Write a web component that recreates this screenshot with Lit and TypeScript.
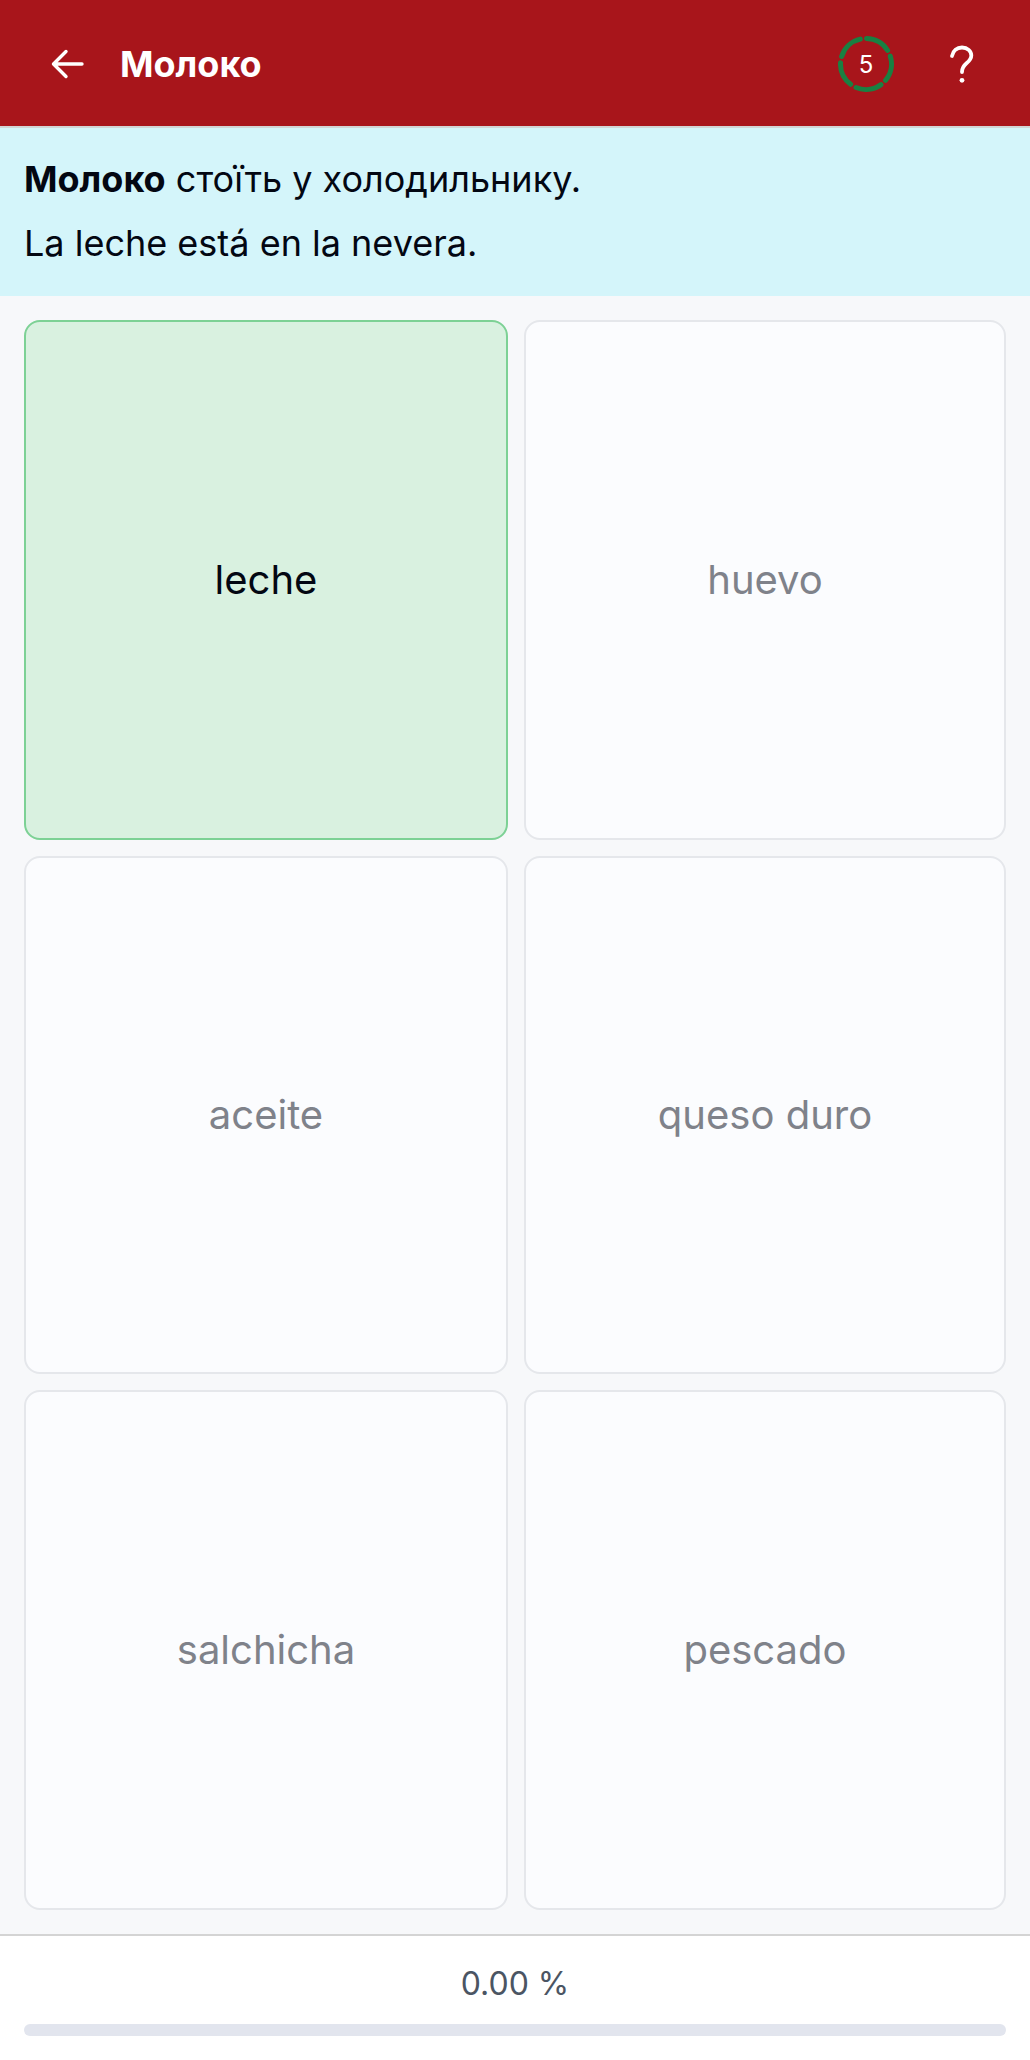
import { LitElement, html, css } from "lit";
import { customElement } from "lit/decorators.js";

const OPTIONS = [
    { label: "leche", correct: true },
    { label: "huevo", correct: false },
    { label: "aceite", correct: false },
    { label: "queso duro", correct: false },
    { label: "salchicha", correct: false },
    { label: "pescado", correct: false },
];

// where the timer ring is broken, degrees clockwise from 12 o'clock
const RING_GAPS = [-6, 65, 137, 210, 280];
const RING_R = 25.5;

function ringPath() {
    const point = (deg: number) => {
        const a = (deg * Math.PI) / 180;
        return `${(28 + RING_R * Math.sin(a)).toFixed(2)} ${(28 - RING_R * Math.cos(a)).toFixed(2)}`;
    };
    return RING_GAPS.map((gap, i) => {
        const next = RING_GAPS[(i + 1) % RING_GAPS.length] + (i === RING_GAPS.length - 1 ? 360 : 0);
        return `M${point(gap + 7)}A${RING_R} ${RING_R} 0 0 1 ${point(next - 7)}`;
    }).join("");
}

@customElement("app-root")
export class AppRoot extends LitElement {
    static styles = css`
        :host {
            display: flex;
            flex-direction: column;
            width: 1030px;
            height: 2060px;
            background: #f7f8fa;
            font-family: Inter, "Noto Sans", sans-serif;
            color: #030712;
        }
        .toolbar {
            flex: none;
            display: flex;
            align-items: center;
            box-sizing: border-box;
            height: 128px;
            padding: 2px 24px 0;
            background: #a8151b;
            color: #fff;
            border-bottom: 2px solid #d1d5d5;
        }
        .back {
            display: block;
            width: 48px;
            height: 48px;
            margin-left: 20px;
        }
        .title {
            flex: 1;
            margin-left: 28px;
            font-size: 36px;
            font-weight: 700;
        }
        .timer {
            position: relative;
            width: 56px;
            height: 56px;
            margin-right: 44px;
            display: flex;
            align-items: center;
            justify-content: center;
            font-size: 24px;
        }
        .timer svg {
            position: absolute;
            inset: 0;
        }
        .help {
            display: block;
            width: 48px;
            height: 48px;
            margin-right: 20px;
        }
        .hint {
            flex: none;
            height: 168px;
            box-sizing: border-box;
            padding: 0 24px 2px;
            display: flex;
            flex-direction: column;
            justify-content: center;
            gap: 20px;
            background: #d4f5fa;
            font-size: 36px;
            line-height: 44px;
        }
        .hint p {
            margin: 0;
        }
        .grid {
            flex: 1;
            display: grid;
            grid-template-columns: 484px 482px;
            grid-template-rows: 520px 518px 520px;
            gap: 16px;
            padding: 24px;
        }
        .card {
            display: flex;
            align-items: center;
            justify-content: center;
            padding-bottom: 2px;
            border: 2px solid #e5e7eb;
            border-radius: 16px;
            background: #fbfcfe;
            color: #7f828a;
            font-size: 40px;
        }
        .card.correct {
            border-color: #7dd195;
            background: #d9f1e0;
            color: #030712;
        }
        .footer {
            flex: none;
            height: 126px;
            box-sizing: border-box;
            padding: 29px 24px 0;
            background: #fff;
            border-top: 2px solid #d4d4d4;
            text-align: center;
            font-size: 32px;
            line-height: 38px;
            color: #4b5563;
        }
        .bar {
            height: 12px;
            margin-top: 21px;
            border-radius: 6px;
            background: #e2e5ee;
        }
    `;

    render() {
        return html`
            <div class="toolbar">
                <svg class="back" viewBox="0 0 48 48" fill="none" stroke="#fff" stroke-width="3.4" stroke-linecap="round" stroke-linejoin="round">
                    <path d="M38 24H9.500M22 11.500 9.500 24 22 36.500" />
                </svg>
                <div class="title">Молоко</div>
                <div class="timer">
                    <svg viewBox="0 0 56 56" fill="none" stroke="#1a8042" stroke-width="5" stroke-linecap="round">
                        <path d=${ringPath()} />
                    </svg>
                    <span>5</span>
                </div>
                <svg class="help" viewBox="0 0 48 48" fill="none" stroke="#fff" stroke-width="3.8" stroke-linecap="round">
                    <path d="M14 16C15 10.500 19 7.500 24 7.500c5.500 0 9.300 3.500 9.300 8 0 3.500-2 5.500-4.800 7.800-3 2.500-4.500 4.700-4.500 8.700" />
                    <circle cx="24" cy="40.300" r="2.400" fill="#fff" stroke="none" />
                </svg>
            </div>
            <div class="hint">
                <p><b>Молоко</b> стоїть у холодильнику.</p>
                <p>La leche está en la nevera.</p>
            </div>
            <div class="grid">
                ${OPTIONS.map(
                    (o) => html`<div class="card ${o.correct ? "correct" : ""}">${o.label}</div>`
                )}
            </div>
            <div class="footer">
                0.00 %
                <div class="bar"></div>
            </div>
        `;
    }
}

declare global {
    interface HTMLElementTagNameMap {
        "app-root": AppRoot;
    }
}
